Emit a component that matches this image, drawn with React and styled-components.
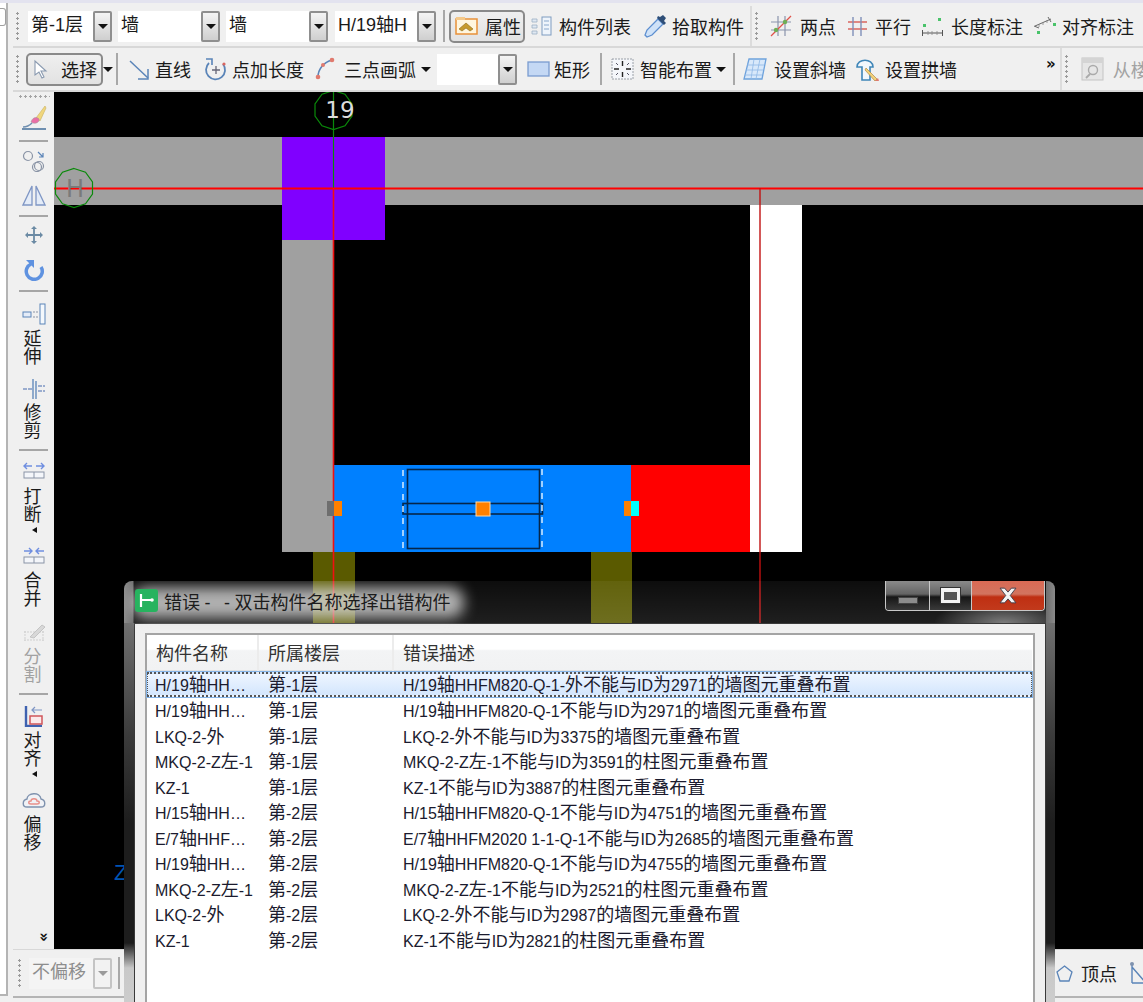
import styled, { createGlobalStyle } from 'styled-components';

const GlobalStyle = createGlobalStyle`
  html, body {
    margin: 0;
    padding: 0;
    background: #f0f0f0;
  }
  body {
    font-family: "Liberation Sans", "Noto Sans CJK SC", sans-serif;
    font-size: 18px;
    color: #1a1a1a;
  }
`;

const Page = styled.div`
  position: relative;
  display: flex;
  flex-direction: column;
  width: 1143px;
  height: 1002px;
  overflow: hidden;
  background: #f0f0f0;
`;

const TopStrip = styled.div`
  height: 3px;
  flex: none;
  background: #e3e3ef;
`;

const Main = styled.div`
  flex: 1;
  display: flex;
  min-height: 0;
`;

const SidePanel = styled.div`
  width: 6px;
  flex: none;
  background: #fff;
  border-right: 2px solid #b4b4b4;
  border-bottom: 2px solid #b4b4b4;
  margin-bottom: 6px;
  padding-top: 5px;
`;

const SideTab = styled.div`
  height: 18px;
  border: 1px solid #a0a0a0;
  border-left: 0;
  border-radius: 0 3px 3px 0;
  box-sizing: border-box;
`;

const Work = styled.div`
  flex: 1;
  display: flex;
  flex-direction: column;
  margin-left: 5px;
  min-width: 0;
`;

const ToolRow = styled.div`
  display: flex;
  align-items: center;
  flex: none;
  height: ${p => p.$h}px;
  padding-top: ${p => p.$pt || 0}px;
  background: #f0f0f0;
  border-bottom: 2px solid #d8d8d8;
  box-sizing: border-box;
  white-space: nowrap;
  overflow: hidden;
`;

const Grip = styled.div`
  flex: none;
  width: 3px;
  height: 30px;
  margin-left: ${p => p.$ml}px;
  background: radial-gradient(circle, #9a9a9a 1px, transparent 1.4px) 0 0 / 3px 5px;
`;

const Sep = styled.div`
  flex: none;
  width: 2px;
  height: 32px;
  margin-left: ${p => p.$ml}px;
  background: #a8a8a8;
`;

const SegmentEnd = styled.div`
  flex: none;
  align-self: stretch;
  width: 2px;
  margin-left: ${p => p.$ml}px;
  background: #dcdcdc;
`;

const Combo = styled.div`
  display: flex;
  flex: none;
  height: 31px;
  margin-left: ${p => p.$ml}px;
`;

const ComboField = styled.div`
  width: ${p => p.$w}px;
  padding-left: 3px;
  box-sizing: border-box;
  background: ${p => (p.$off ? '#f4f4f4' : '#fff')};
  color: ${p => (p.$off ? '#8d8d8d' : '#1a1a1a')};
  line-height: 29px;
  overflow: hidden;
`;

const ComboButton = styled.div`
  width: 19px;
  box-sizing: border-box;
  display: flex;
  align-items: center;
  justify-content: center;
  border: 2px solid ${p => (p.$off ? '#c4c4c4' : '#8f8f8f')};
  border-radius: 2px;
  background: ${p => (p.$off ? '#f2f2f2' : 'linear-gradient(#f4f4f4, #cfcfcf)')};
`;

const Caret = styled.span`
  width: 0;
  height: 0;
  flex: none;
  margin-left: ${p => p.$ml || 0}px;
  border-left: 5px solid transparent;
  border-right: 5px solid transparent;
  border-top: 5px solid ${p => p.$color || '#111'};
`;

const Pressed = styled.div`
  display: flex;
  align-items: center;
  flex: none;
  box-sizing: border-box;
  width: ${p => p.$w}px;
  height: 33px;
  margin-left: ${p => p.$ml}px;
  padding-left: 4px;
  gap: ${p => p.$gap}px;
  border: 2px solid #8a8a8a;
  border-radius: 5px;
  background: linear-gradient(#efefef, #e2e2e2);
`;

const Tool = styled.div`
  display: flex;
  align-items: center;
  flex: none;
  margin-left: ${p => p.$ml}px;
  gap: ${p => p.$gap}px;
  color: ${p => (p.$off ? '#a2a2a2' : 'inherit')};
`;

const Chevrons = styled.div`
  flex: none;
  align-self: flex-start;
  margin: 9px 0 0 ${p => p.$ml}px;
  font: bold 15px/14px "DejaVu Sans", sans-serif;
  color: #111;
`;

const Middle = styled.div`
  flex: 1;
  display: flex;
  min-height: 0;
`;

const SideBar = styled.div`
  display: flex;
  flex-direction: column;
  align-items: center;
  flex: none;
  width: 41px;
  background: #f0f0f0;
`;

const SideGrip = styled.div`
  flex: none;
  width: 32px;
  height: 3px;
  margin-top: 3px;
  background: radial-gradient(circle, #a4a4a4 1px, transparent 1.4px) 0 0 / 5px 3px;
`;

const SideSep = styled.div`
  flex: none;
  width: 29px;
  height: 2px;
  margin-top: ${p => p.$mt}px;
  background: #a6a6a6;
`;

const SideIcon = styled.div`
  flex: none;
  display: flex;
  margin-top: ${p => p.$mt}px;
`;

const SideLabel = styled.div`
  flex: none;
  width: 18px;
  margin-top: ${p => p.$mt}px;
  margin-right: 2px;
  line-height: 18px;
  text-align: center;
  color: ${p => (p.$off ? '#a2a2a2' : 'inherit')};
`;

const SideCaret = styled.span`
  flex: none;
  width: 0;
  height: 0;
  margin-top: 3px;
  margin-left: 2px;
  border-top: 3px solid transparent;
  border-bottom: 3px solid transparent;
  border-right: 5px solid #111;
`;

const SideMore = styled.div`
  flex: none;
  margin: auto 0 5px 20px;
  font: bold 15px/14px "DejaVu Sans", sans-serif;
  transform: rotate(90deg);
  color: #111;
`;

const Canvas = styled.svg`
  flex: 1;
  display: block;
  min-width: 0;
  height: 861px;
  background: #000;
`;

const BottomWrap = styled.div`
  flex: none;
  height: 49px;
  background: #f0f0f0;
  border-top: 1px solid #d8d8d8;
  box-sizing: border-box;
  border-bottom: 2px solid #b4b4b4;
  display: flex;
  align-items: center;
  margin-bottom: 4px;
`;

const Dialog = styled.div`
  position: absolute;
  left: 124px;
  top: 581px;
  width: 931px;
  height: 440px;
  display: flex;
  flex-direction: column;
  border-radius: 8px 8px 0 0;
  overflow: hidden;
`;

const TitleBar = styled.div`
  flex: none;
  height: 42px;
  position: relative;
  display: flex;
  align-items: center;
  padding: 0 0 3px 11px;
  box-sizing: border-box;
  background:
    linear-gradient(90deg, #8c8c8c 0, #707070 9px, transparent 10px, transparent 922px, #6e6e6e 922px, #8a8a8a 931px),
    radial-gradient(70px 24px at 880px 42px, rgba(255, 255, 255, 0.42), transparent),
    linear-gradient(rgba(255, 255, 255, 0.05), rgba(255, 255, 255, 0.12));
`;

const TitleGlow = styled.div`
  position: absolute;
  left: 8px;
  top: 6px;
  width: 332px;
  height: 31px;
  background: rgba(215, 215, 215, 0.8);
  border-radius: 14px;
  filter: blur(7px);
`;

const AppIcon = styled.div`
  position: relative;
  flex: none;
  width: 23px;
  height: 23px;
  display: flex;
`;

const TitleText = styled.div`
  position: relative;
  margin-left: 6px;
  color: #1c1c1c;
  white-space: pre;
  word-spacing: -0.5px;
`;

const WinButtons = styled.div`
  position: absolute;
  top: 0;
  right: 10px;
  display: flex;
  height: 29px;
  border: 1px solid #c8c8c8;
  border-top: 0;
  border-radius: 0 0 4px 4px;
  overflow: hidden;
`;

const WinButton = styled.div`
  width: ${p => p.$w}px;
  display: flex;
  align-items: center;
  justify-content: center;
  border-left: ${p => (p.$first ? '0' : '1px solid #c8c8c8')};
  background: ${p =>
    p.$close
      ? 'linear-gradient(#d96a55 0, #d2745f 45%, #bf2f12 55%, #c23a1c 100%)'
      : 'linear-gradient(#8a8a8a 0, #646464 45%, #161616 55%, #3a3a3a 100%)'};
`;

const MinGlyph = styled.div`
  width: 18px;
  height: 5px;
  margin-top: 10px;
  background: #8c8c8c;
  border: 1px solid #444;
`;

const MaxGlyph = styled.div`
  width: 19px;
  height: 15px;
  box-sizing: border-box;
  border: 3px solid #f4f4f4;
  border-top-width: 4px;
  background: #555;
  outline: 1px solid #333;
`;

const CloseGlyph = styled.svg`
  display: block;
`;

const DialogBody = styled.div`
  flex: 1;
  display: flex;
  min-height: 0;
`;

const Edge = styled.div`
  flex: none;
  width: ${p => p.$w}px;
  background: linear-gradient(#707070 0, #3c3c3c 110px, #1d1d1d 200px, #1d1d1d 320px, #c8c8c8 345px, #d0d0d0 100%);
`;

const Client = styled.div`
  flex: 1;
  min-width: 0;
  padding: 9px 10px 0;
  background: #f0f0f0;
  border: 1px solid #3a3a3a;
  border-bottom: 0;
`;

const ListBox = styled.div`
  height: 100%;
  box-sizing: border-box;
  background: #fff;
  border: 2px solid #a4a4a4;
  border-bottom: 0;
  padding-right: 1px;
`;

const ListHead = styled.div`
  display: grid;
  grid-template-columns: 112px 135px 1fr;
  height: 37px;
  box-sizing: border-box;
  border-bottom: 2px solid #e2e2e2;
  background: linear-gradient(#fff 0, #fff 40%, #f3f4f5 45%, #f1f2f3 100%);
`;

const HeadCell = styled.div`
  padding-left: 9px;
  line-height: 39px;
  color: #333;
  border-right: ${p => (p.$last ? '0' : '2px solid #ececec')};
`;

const ListRow = styled.div`
  display: grid;
  grid-template-columns: 112px 135px 1fr;
  height: ${p => (p.$selected ? 25 : 25.5)}px;
  box-sizing: border-box;
  line-height: ${p => (p.$selected ? 23 : 25)}px;
  color: #1b1b2e;
  white-space: nowrap;
  ${p =>
    p.$selected &&
    `
    margin-bottom: 2px;
    text-indent: -1px;
    background: linear-gradient(#eef5ff, #d3e6fd);
    border-top: 2px dotted #555;
    border-bottom: 2px dotted #555;
    border-left: 1px dotted #555;
    border-right: 1px dotted #555;
    outline: 1px solid #84b4e8;
  `}
`;

const Cell = styled.div`
  padding-left: ${p => (p.$first ? 8 : 9)}px;
`;

const Latin = styled.span`
  font-size: 16px;
`;

const IconSvg = styled.svg`
  display: block;
  flex: none;
`;

const Ico = ({ w = 22, h = 22, children }) => (
  <IconSvg width={w} height={h} viewBox={`0 0 ${w} ${h}`} fill="none">
    {children}
  </IconSvg>
);

// latin runs in the list are set smaller than the chinese around them
function Mixed({ text }) {
  return text.split(/([\u0000-\u00ff…]+)/).map((part, i) =>
    i % 2 ? <Latin key={i}>{part}</Latin> : part
  );
}

const rows = [
  ['H/19轴HH…', '第-1层', 'H/19轴HHFM820-Q-1-外不能与ID为2971的墙图元重叠布置'],
  ['H/19轴HH…', '第-1层', 'H/19轴HHFM820-Q-1不能与ID为2971的墙图元重叠布置'],
  ['LKQ-2-外', '第-1层', 'LKQ-2-外不能与ID为3375的墙图元重叠布置'],
  ['MKQ-2-Z左-1', '第-1层', 'MKQ-2-Z左-1不能与ID为3591的柱图元重叠布置'],
  ['KZ-1', '第-1层', 'KZ-1不能与ID为3887的柱图元重叠布置'],
  ['H/15轴HH…', '第-2层', 'H/15轴HHFM820-Q-1不能与ID为4751的墙图元重叠布置'],
  ['E/7轴HHF…', '第-2层', 'E/7轴HHFM2020 1-1-Q-1不能与ID为2685的墙图元重叠布置'],
  ['H/19轴HH…', '第-2层', 'H/19轴HHFM820-Q-1不能与ID为4755的墙图元重叠布置'],
  ['MKQ-2-Z左-1', '第-2层', 'MKQ-2-Z左-1不能与ID为2521的柱图元重叠布置'],
  ['LKQ-2-外', '第-2层', 'LKQ-2-外不能与ID为2987的墙图元重叠布置'],
  ['KZ-1', '第-2层', 'KZ-1不能与ID为2821的柱图元重叠布置'],
];

function polygon(cx, cy, r, n) {
  const pts = [];
  for (let i = 0; i < n; i++) {
    const a = (Math.PI * 2 * i) / n - Math.PI / 2;
    pts.push(`${(cx + r * Math.cos(a)).toFixed(1)},${(cy + r * Math.sin(a)).toFixed(1)}`);
  }
  return pts.join(' ');
}

function CadDrawing() {
  // canvas origin sits at page x 54, y 92
  return (
    <Canvas viewBox="54 92 1089 861" width="1089" height="861">
      <rect x="54" y="137" width="1089" height="68" fill="#a0a0a0" />
      <rect x="282" y="240" width="52" height="312" fill="#a0a0a0" />
      <rect x="282" y="137" width="103" height="103" fill="#8000ff" />
      <rect x="750" y="205" width="52" height="347" fill="#fff" />
      <rect x="334" y="465" width="297" height="87" fill="#0080ff" />
      <rect x="631" y="465" width="119" height="87" fill="#ff0000" />
      <rect x="313" y="552" width="42" height="75" fill="#5a5a00" />
      <rect x="591" y="552" width="41" height="75" fill="#5a5a00" />

      <line x1="333.5" y1="92" x2="333.5" y2="188" stroke="#0a8a0a" strokeWidth="1.2" />
      <line x1="54" y1="188.5" x2="1143" y2="188.5" stroke="#ff0000" strokeWidth="1.8" />
      <line x1="333.5" y1="188" x2="333.5" y2="630" stroke="#f01010" strokeWidth="1.6" />
      <line x1="760" y1="188" x2="760" y2="630" stroke="#c01010" strokeWidth="1.4" />

      <rect x="407.5" y="469.5" width="132" height="79" stroke="#06264a" strokeWidth="1.6" fill="none" />
      <rect x="403" y="503.5" width="139.5" height="10.5" stroke="#06264a" strokeWidth="1.6" fill="none" />
      <line x1="403" y1="470" x2="403" y2="549" stroke="#d8ecff" strokeWidth="1.5" strokeDasharray="6 6" />
      <line x1="542" y1="469" x2="542" y2="549" stroke="#d8ecff" strokeWidth="1.5" strokeDasharray="6 6" />

      <rect x="476" y="502" width="14" height="14" fill="#ff8000" stroke="#ffd9a8" strokeWidth="1" />
      <rect x="327" y="501" width="7" height="15" fill="#6e6e6e" />
      <rect x="334" y="501" width="8" height="15" fill="#ff8000" />
      <rect x="624" y="501" width="7" height="15" fill="#ff8000" />
      <rect x="631" y="501" width="8" height="15" fill="#00ffff" />

      <polygon points={polygon(74, 188, 19.5, 10)} fill="none" stroke="#0a8a0a" strokeWidth="1.2" />
      <polygon points={polygon(333.5, 110, 19.5, 10)} fill="none" stroke="#0a8a0a" strokeWidth="1.2" />
      <text x="75" y="197" textAnchor="middle" fontFamily="DejaVu Sans" fontSize="24" fill="#7a7a7a">H</text>
      <text x="340" y="118" textAnchor="middle" fontFamily="DejaVu Sans" fontSize="23" fill="#dcdcdc">19</text>
      <text x="114" y="880" fontFamily="Liberation Sans" fontSize="22" fill="#0054b4">Z</text>
    </Canvas>
  );
}

export default function App() {
  return (
    <Page>
      <GlobalStyle />
      <TopStrip />
      <Main>
        <SidePanel>
          <SideTab />
        </SidePanel>
        <Work>
          <ToolRow $h={45} $pt={3}>
            <Grip $ml={3} />
            <Combo $ml={9}>
              <ComboField $w={65}>第-1层</ComboField>
              <ComboButton><Caret /></ComboButton>
            </Combo>
            <Combo $ml={6}>
              <ComboField $w={83}>墙</ComboField>
              <ComboButton><Caret /></ComboButton>
            </Combo>
            <Combo $ml={6}>
              <ComboField $w={83}>墙</ComboField>
              <ComboButton><Caret /></ComboButton>
            </Combo>
            <Combo $ml={7}>
              <ComboField $w={82}>H/19轴H</ComboField>
              <ComboButton><Caret /></ComboButton>
            </Combo>
            <Sep $ml={7} />
            <Pressed $ml={4} $w={76} $gap={6}>
              <Ico w={24} h={20}>
                <rect x="1" y="3" width="21" height="15" fill="#fff6df" stroke="#e8913a" strokeWidth="1.5" />
                <rect x="1" y="1" width="9" height="3" fill="#f4c98a" />
                <path d="M4 13l7-6 7 6-3 2-4-3-4 3z" fill="#c69a2e" stroke="#8f6a14" strokeWidth=".6" />
              </Ico>
              属性
            </Pressed>
            <Tool $ml={5} $gap={7}>
              <Ico w={22} h={22}>
                <rect x="12" y="2" width="9" height="18" fill="#eef4fb" stroke="#7e9cc0" />
                <path d="M14 6h5M14 10h5M14 14h5" stroke="#8aa8cc" />
                <path d="M2 4h5v3H2zM2 10h5v3H2zM2 16h5v3H2z" fill="#dfe8f2" stroke="#9db0c4" strokeWidth=".8" />
              </Ico>
              构件列表
            </Tool>
            <Tool $ml={12} $gap={4}>
              <Ico w={25} h={24}>
                <path d="M4 23l-2-2 2-5L15 5l5 5L9 21z" fill="#cfe2f8" stroke="#5d8fd0" strokeWidth="1.3" />
                <path d="M14 4l7 7 2-2-2-2 2-3-3-3-3 2-2-1z" fill="#2f4f78" />
              </Ico>
              拾取构件
            </Tool>
            <SegmentEnd $ml={6} />
            <Grip $ml={3} />
            <Tool $ml={12} $gap={8}>
              <Ico w={22} h={22}>
                <path d="M1 7h20M1 15h20M8 1v20M15 1v20" stroke="#8a94ac" strokeWidth="1.2" />
                <path d="M1 21L21 1" stroke="#e0524a" strokeWidth="1.3" />
                <circle cx="6" cy="15" r="2.2" fill="#6fae55" />
                <circle cx="15" cy="7" r="2.2" fill="#6fae55" />
              </Ico>
              两点
            </Tool>
            <Tool $ml={11} $gap={7}>
              <Ico w={21} h={22}>
                <path d="M1 7h19M1 14h19" stroke="#d9655f" strokeWidth="1.4" />
                <path d="M6 2v19M14 2v19" stroke="#7f8fb8" strokeWidth="1.4" />
              </Ico>
              平行
            </Tool>
            <Tool $ml={10} $gap={7}>
              <Ico w={23} h={22}>
                <rect x="2" y="9" width="3" height="3" fill="#49c36a" />
                <rect x="17" y="3" width="3" height="3" fill="#49c36a" />
                <path d="M1.5 15v6M21.5 15v6M2 18h19" stroke="#555" />
                <path d="M7 16v4M11 16v4M16 16v4" stroke="#888" strokeWidth=".8" />
              </Ico>
              长度标注
            </Tool>
            <Tool $ml={10} $gap={4}>
              <Ico w={25} h={22}>
                <rect x="4" y="16" width="3" height="3" fill="#49c36a" />
                <rect x="20" y="8" width="3" height="3" fill="#49c36a" />
                <path d="M1 11l5 2M2 11l16-7M15 2l3 5" stroke="#666" />
                <path d="M6 9v3M10 7v3M14 5v3" stroke="#888" strokeWidth=".8" />
              </Ico>
              对齐标注
            </Tool>
          </ToolRow>
          <ToolRow $h={44}>
            <Grip $ml={3} />
            <Pressed $ml={7} $w={77} $gap={13}>
              <Ico w={16} h={20}>
                <path d="M3 2l0 14 4-3 3 6 2-1-3-6 5 0z" fill="#fff" stroke="#8a9ab0" strokeWidth="1.1" />
              </Ico>
              选择
            </Pressed>
            <Caret $ml={0} />
            <Sep $ml={3} />
            <Tool $ml={10} $gap={5}>
              <Ico w={22} h={22}>
                <path d="M2 3l18 17" stroke="#5a84b8" strokeWidth="1.5" />
                <path d="M20 11v10H10" stroke="#5a84b8" strokeWidth="1.5" />
              </Ico>
              直线
            </Tool>
            <Tool $ml={12} $gap={5}>
              <Ico w={24} h={24}>
                <path d="M6 6A9.5 9.5 0 1 0 20 7" stroke="#5a84b8" strokeWidth="1.8" />
                <path d="M3 2h6v6" stroke="#5a84b8" strokeWidth="1.6" />
                <path d="M13 9v8M9 13h8" stroke="#667" strokeWidth="1.3" />
                <circle cx="21" cy="7" r="1.6" fill="#d9655f" />
              </Ico>
              点加长度
            </Tool>
            <Tool $ml={11} $gap={9}>
              <Ico w={20} h={24}>
                <path d="M3 20C3 12 9 5 17 3" stroke="#5a84b8" strokeWidth="1.6" />
                <circle cx="3" cy="20" r="2.3" fill="#e07a6e" />
                <circle cx="8" cy="8" r="2" fill="#e07a6e" />
                <circle cx="17" cy="3" r="2.3" fill="#e07a6e" />
              </Ico>
              三点画弧
            </Tool>
            <Caret $ml={5} />
            <Combo $ml={6}>
              <ComboField $w={61} />
              <ComboButton><Caret /></ComboButton>
            </Combo>
            <Tool $ml={10} $gap={4}>
              <Ico w={23} h={18}>
                <rect x="1" y="2" width="21" height="14" fill="#c4d8f4" stroke="#7a9cd0" strokeWidth="1.3" />
              </Ico>
              矩形
            </Tool>
            <Sep $ml={10} />
            <Tool $ml={9} $gap={6}>
              <Ico w={23} h={22}>
                <rect x="1" y="1" width="21" height="20" fill="#f4f6fa" stroke="#9aa0a8" strokeDasharray="2 1" />
                <path d="M11.5 3v5M11.5 14v5M3 11h5M15 11h5" stroke="#222" strokeWidth="1.4" />
                <path d="M5 5l2 2M18 5l-2 2M5 17l2-2M18 17l-2-2" stroke="#556" />
              </Ico>
              智能布置
            </Tool>
            <Caret $ml={4} />
            <Sep $ml={7} />
            <Tool $ml={8} $gap={7}>
              <Ico w={24} h={24}>
                <path d="M6 2h17l-4 20H1z" fill="#d8e8fa" stroke="#6ea2dc" strokeWidth="1.3" />
                <path d="M4 8h17M3 13h17M2 18h17M11 2L8 22M17 2l-4 20" stroke="#8fb8e6" strokeWidth=".8" />
              </Ico>
              设置斜墙
            </Tool>
            <Tool $ml={9} $gap={5}>
              <Ico w={25} h={25}>
                <path d="M2 10C2 1 18 1 18 10l-3 0 0 13-8 0 0-13z" fill="#f2f8fd" stroke="#3f86b8" strokeWidth="1.6" />
                <path d="M11 11l11 11-2 2L10 13z" fill="#f3d27a" stroke="#b08a44" strokeWidth=".7" />
                <path d="M20 24l3-3 1 3z" fill="#e07a6e" />
              </Ico>
              设置拱墙
            </Tool>
            <Chevrons $ml={89}>»</Chevrons>
            <SegmentEnd $ml={4} />
            <Grip $ml={3} />
            <Tool $ml={13} $gap={9} $off>
              <Ico w={23} h={24}>
                <rect x="1" y="1" width="21" height="22" fill="#e6e6e6" stroke="#c4c4c4" />
                <rect x="1" y="1" width="21" height="5" fill="#d4d4d4" />
                <circle cx="12" cy="13" r="4.5" stroke="#aaa" strokeWidth="1.4" />
                <path d="M9 17l-4 4" stroke="#aaa" strokeWidth="1.8" />
              </Ico>
              从楼
            </Tool>
          </ToolRow>
          <Middle>
            <SideBar>
              <SideGrip />
              <SideIcon $mt={7}>
                <Ico w={26} h={26}>
                  <path d="M15 13L24 1l1 2-6 13z" fill="#f0d67c" stroke="#c8b060" strokeWidth=".6" />
                  <path d="M10 17c1-4 5-6 8-3 1 3-4 6-8 3z" fill="#e96fa6" stroke="#999" strokeWidth=".5" />
                  <path d="M1 24h24" stroke="#6f8fb0" strokeWidth="2" />
                  <path d="M2 22c3 0 6-1 9-4" stroke="#6f8fb0" strokeWidth="1.5" />
                </Ico>
              </SideIcon>
              <SideSep $mt={9} />
              <SideIcon $mt={8}>
                <Ico w={24} h={22}>
                  <circle cx="6" cy="6" r="4.5" stroke="#8a94a6" strokeWidth="1.2" />
                  <circle cx="17" cy="16" r="4.5" stroke="#8a94a6" strokeWidth="1.2" />
                  <circle cx="15" cy="17" r="4.5" stroke="#8a94a6" strokeWidth="1.2" />
                  <path d="M16 2l5 5M21 3v4h-4" stroke="#5a84b8" strokeWidth="1.2" />
                </Ico>
              </SideIcon>
              <SideIcon $mt={12}>
                <Ico w={24} h={22}>
                  <path d="M10 2v19H1zM14 2v19h9z" fill="#e4ecf8" stroke="#7f96c4" strokeWidth="1.3" />
                </Ico>
              </SideIcon>
              <SideSep $mt={9} />
              <SideIcon $mt={8}>
                <Ico w={22} h={20}>
                  <path d="M11 2v16M3 10h16" stroke="#6b8aa4" strokeWidth="1.8" />
                  <path d="M8 4l3-3 3 3zM8 16l3 3 3-3zM5 7l-3 3 3 3zM17 7l3 3-3 3z" fill="#6b8aa4" />
                </Ico>
              </SideIcon>
              <SideIcon $mt={14}>
                <Ico w={22} h={22}>
                  <path d="M8 5a8 8 0 1 0 10 3" stroke="#5f92e0" strokeWidth="3.5" />
                  <path d="M3 1h8v8z" fill="#5f92e0" />
                </Ico>
              </SideIcon>
              <SideSep $mt={9} />
              <SideIcon $mt={11}>
                <Ico w={24} h={22}>
                  <rect x="18" y="1" width="5" height="20" fill="#f4f8fc" stroke="#5a84b8" />
                  <rect x="1" y="9" width="8" height="5" stroke="#5a84b8" fill="#e4ecf8" />
                  <path d="M11 9h5M11 14h5" stroke="#8a94a6" strokeDasharray="2 1" />
                </Ico>
              </SideIcon>
              <SideLabel $mt={5}>延伸</SideLabel>
              <SideIcon $mt={12}>
                <Ico w={24} h={22}>
                  <path d="M11 1v20M14 3v18" stroke="#5a84b8" strokeWidth="1.3" />
                  <path d="M1 11h9M16 8h7M16 13h7" stroke="#7f96c4" strokeWidth="1.3" strokeDasharray="4 1" />
                </Ico>
              </SideIcon>
              <SideLabel $mt={4}>修剪</SideLabel>
              <SideSep $mt={9} />
              <SideIcon $mt={11}>
                <Ico w={24} h={18}>
                  <path d="M10 4H2M5 1L2 4l3 3M14 4h8M19 1l3 3-3 3" stroke="#6f8ee0" strokeWidth="1.4" />
                  <rect x="2" y="10" width="20" height="6" fill="#f4f6fa" stroke="#8a94a6" />
                  <path d="M12 10v6" stroke="#8a94a6" />
                </Ico>
              </SideIcon>
              <SideLabel $mt={8}>打断</SideLabel>
              <SideCaret />
              <SideIcon $mt={14}>
                <Ico w={24} h={18}>
                  <path d="M2 4h8M7 1l3 3-3 3M22 4h-8M17 1l-3 3 3 3" stroke="#6f8ee0" strokeWidth="1.4" />
                  <rect x="2" y="10" width="20" height="6" fill="#f4f6fa" stroke="#8a94a6" />
                  <path d="M12 10v6" stroke="#8a94a6" />
                </Ico>
              </SideIcon>
              <SideLabel $mt={7}>合并</SideLabel>
              <SideIcon $mt={14}>
                <Ico w={24} h={20}>
                  <path d="M2 10h20M2 18h20M3 9v10M21 9v10" stroke="#cfcfcf" strokeDasharray="2 1" />
                  <path d="M8 15L20 3l3 2-11 11z" fill="#d8d8d8" stroke="#c4c4c4" />
                </Ico>
              </SideIcon>
              <SideLabel $mt={6} $off>分割</SideLabel>
              <SideSep $mt={9} />
              <SideIcon $mt={10}>
                <Ico w={20} h={22}>
                  <path d="M2 1v20h16" stroke="#3f62b0" strokeWidth="2.4" />
                  <rect x="6" y="11" width="12" height="8" stroke="#d0555a" strokeWidth="1.5" fill="#fbeaea" />
                  <path d="M18 5H8M11 2L8 5l3 3" stroke="#7f96c4" strokeWidth="1.2" />
                </Ico>
              </SideIcon>
              <SideLabel $mt={5}>对齐</SideLabel>
              <SideCaret />
              <SideIcon $mt={14}>
                <Ico w={24} h={18}>
                  <path d="M5 16C0 16 0 9 5 8c0-6 13-8 14 0 5 1 5 8 0 8z" stroke="#7f92ae" strokeWidth="1.4" fill="#f0f2f6" />
                  <path d="M9 13c-3 0-3-3 0-3 0-3 6-3 6 0 3 0 3 3 0 3z" stroke="#e8908a" strokeWidth="1.4" />
                </Ico>
              </SideIcon>
              <SideLabel $mt={7}>偏移</SideLabel>
              <SideMore>»</SideMore>
            </SideBar>
            <CadDrawing />
          </Middle>
          <BottomWrap>
            <Grip $ml={5} />
            <Combo $ml={8}>
              <ComboField $w={64} $off>不偏移</ComboField>
              <ComboButton $off><Caret $color="#9a9a9a" /></ComboButton>
            </Combo>
            <Sep $ml={6} />
            <Tool $ml={936} $gap={8}>
              <Ico w={17} h={18}>
                <path d="M8.5 2L16 8l-3 9H4L1 8z" stroke="#5a84b8" strokeWidth="1.3" />
              </Ico>
              顶点
            </Tool>
            <Tool $ml={11} $gap={0}>
              <Ico w={20} h={24}>
                <path d="M4 4v18M4 22h14L4 6" stroke="#5a84b8" strokeWidth="1.4" />
                <circle cx="4" cy="3" r="2" fill="#7f92ae" />
              </Ico>
            </Tool>
          </BottomWrap>
        </Work>
      </Main>

      <Dialog>
        <TitleBar>
          <TitleGlow />
          <AppIcon>
            <Ico w={23} h={23}>
              <rect x="0" y="0" width="23" height="23" rx="3" fill="#27b35f" />
              <path d="M6 5v13M6 11h10" stroke="#fff" strokeWidth="2.2" />
              <circle cx="17" cy="11" r="1.8" fill="#fff" />
            </Ico>
          </AppIcon>
          <TitleText>错误 -   - 双击构件名称选择出错构件</TitleText>
          <WinButtons>
            <WinButton $w={43} $first><MinGlyph /></WinButton>
            <WinButton $w={41}><MaxGlyph /></WinButton>
            <WinButton $w={72} $close>
              <CloseGlyph width="22" height="17" viewBox="0 0 18 15">
                <path d="M2 1h4l3 3.5L12 1h4l-5 6.5 5 6.5h-4l-3-3.5L6 14H2l5-6.5z" fill="#f4f4f4" stroke="#3d3d4a" strokeWidth=".8" />
              </CloseGlyph>
            </WinButton>
          </WinButtons>
        </TitleBar>
        <DialogBody>
          <Edge $w={10} />
          <Client>
            <ListBox>
              <ListHead>
                <HeadCell>构件名称</HeadCell>
                <HeadCell>所属楼层</HeadCell>
                <HeadCell $last>错误描述</HeadCell>
              </ListHead>
              {rows.map((row, i) => (
                <ListRow key={i} $selected={i === 0}>
                  {row.map((text, j) => (
                    <Cell key={j} $first={j === 0}><Mixed text={text} /></Cell>
                  ))}
                </ListRow>
              ))}
            </ListBox>
          </Client>
          <Edge $w={9} />
        </DialogBody>
      </Dialog>
    </Page>
  );
}
